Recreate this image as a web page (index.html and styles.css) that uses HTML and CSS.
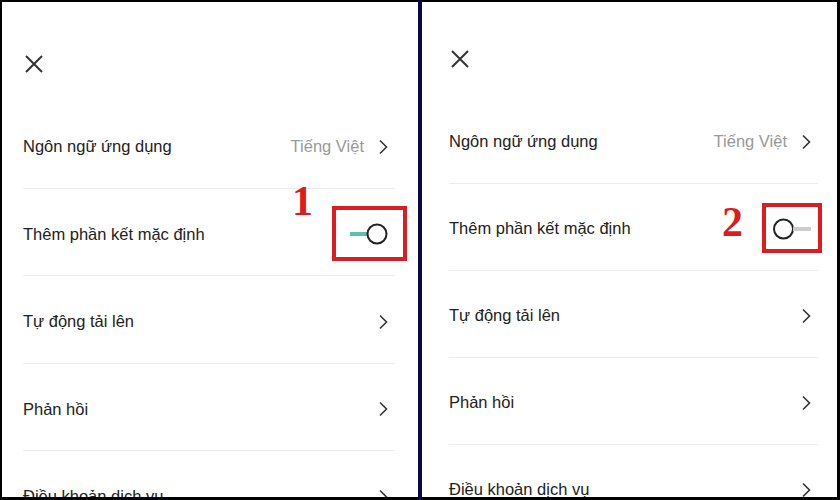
FILE: index.html
```html
<!DOCTYPE html>
<html lang="vi">
<head>
    <meta charset="UTF-8">
    <title>Cài đặt</title>
    <link rel="stylesheet" href="styles.css">
</head>
<body>
    <div class="screen">
        <!-- bước 1: đang bật -->
        <section class="panel panel-left">
            <div class="panel-head">
                <svg class="close-icon" width="22" height="22" viewBox="0 0 22 22"><path d="M3 3L19 19M19 3L3 19" /></svg>
            </div>
            <ul class="menu">
                <li class="menu-row">
                    <span class="label">Ngôn ngữ ứng dụng</span>
                    <span class="row-end">
                        <span class="value">Tiếng Việt</span>
                        <svg class="chevron" width="10" height="16" viewBox="0 0 10 16"><path d="M2 1.5L8.5 8L2 14.5" /></svg>
                    </span>
                </li>
                <li class="menu-row">
                    <span class="label">Thêm phần kết mặc định</span>
                    <svg class="switch" width="38" height="24" viewBox="0 0 38 24"><path class="track-on" d="M0 12H18" /><circle cx="27" cy="12" r="9.5" /></svg>
                    <span class="step-num">1</span>
                    <span class="step-box"></span>
                </li>
                <li class="menu-row">
                    <span class="label">Tự động tải lên</span>
                    <svg class="chevron" width="10" height="16" viewBox="0 0 10 16"><path d="M2 1.5L8.5 8L2 14.5" /></svg>
                </li>
                <li class="menu-row">
                    <span class="label">Phản hồi</span>
                    <svg class="chevron" width="10" height="16" viewBox="0 0 10 16"><path d="M2 1.5L8.5 8L2 14.5" /></svg>
                </li>
                <li class="menu-row">
                    <span class="label">Điều khoản dịch vụ</span>
                    <svg class="chevron" width="10" height="16" viewBox="0 0 10 16"><path d="M2 1.5L8.5 8L2 14.5" /></svg>
                </li>
            </ul>
        </section>

        <div class="split"></div>

        <!-- bước 2: đã tắt -->
        <section class="panel panel-right">
            <div class="panel-head">
                <svg class="close-icon" width="22" height="22" viewBox="0 0 22 22"><path d="M3 3L19 19M19 3L3 19" /></svg>
            </div>
            <ul class="menu">
                <li class="menu-row">
                    <span class="label">Ngôn ngữ ứng dụng</span>
                    <span class="row-end">
                        <span class="value">Tiếng Việt</span>
                        <svg class="chevron" width="10" height="16" viewBox="0 0 10 16"><path d="M2 1.5L8.5 8L2 14.5" /></svg>
                    </span>
                </li>
                <li class="menu-row">
                    <span class="label">Thêm phần kết mặc định</span>
                    <svg class="switch" width="38" height="24" viewBox="0 0 38 24"><circle cx="10.5" cy="12" r="9.5" /><path class="track-off" d="M20 12H38" /></svg>
                    <span class="step-num">2</span>
                    <span class="step-box"></span>
                </li>
                <li class="menu-row">
                    <span class="label">Tự động tải lên</span>
                    <svg class="chevron" width="10" height="16" viewBox="0 0 10 16"><path d="M2 1.5L8.5 8L2 14.5" /></svg>
                </li>
                <li class="menu-row">
                    <span class="label">Phản hồi</span>
                    <svg class="chevron" width="10" height="16" viewBox="0 0 10 16"><path d="M2 1.5L8.5 8L2 14.5" /></svg>
                </li>
                <li class="menu-row">
                    <span class="label">Điều khoản dịch vụ</span>
                    <svg class="chevron" width="10" height="16" viewBox="0 0 10 16"><path d="M2 1.5L8.5 8L2 14.5" /></svg>
                </li>
            </ul>
        </section>
    </div>
</body>
</html>
```

FILE: styles.css
```css
/* chung */
:root {
    --text-color: #222222;
    --muted-color: #999999;
    --line-color: #ececec;
    --mark-color: #dc1c1f;
    --teal: #5dbfae;
}

* {
    margin: 0;
    padding: 0;
    box-sizing: border-box;
}

body {
    font-family: 'Liberation Sans', Arial, sans-serif;
    color: var(--text-color);
    background: #ffffff;
}

.screen {
    width: 840px;
    height: 500px;
    display: flex;
    overflow: hidden;
}

.panel {
    background: #ffffff;
    border-top: 2px solid #000000;
    border-bottom: 3px solid #000000;
    overflow: hidden;
}

.panel-left {
    width: 418px;
    border-left: 2px solid #000000;
    padding: 0 23px 0 21px;
}

.panel-right {
    flex: 1;
    border-right: 3px solid #000000;
    padding: 0 19px 0 27px;
}

/* thanh chia giữa */
.split {
    width: 4px;
    background: #0b0b3b;
}

.panel-head {
    display: flex;
    align-items: flex-start;
}

.panel-left .panel-head {
    height: 99px;
    padding-top: 51px;
}

.panel-right .panel-head {
    height: 95px;
    padding-top: 46px;
}

.close-icon path {
    fill: none;
    stroke: #333333;
    stroke-width: 2;
}

.menu {
    list-style: none;
}

.menu-row {
    position: relative;
    display: flex;
    align-items: center;
    justify-content: space-between;
    border-bottom: 1px solid var(--line-color);
    padding-right: 7px;
    font-size: 16.5px;
}

.panel-left .menu-row {
    height: 87.5px;
    padding-top: 5px;
}

.panel-right .menu-row {
    height: 87px;
    padding-top: 3px;
}

.row-end {
    display: flex;
    align-items: center;
    gap: 14px;
}

.value {
    color: var(--muted-color);
}

.chevron path {
    fill: none;
    stroke: #333333;
    stroke-width: 1.6;
}

.switch circle {
    fill: #ffffff;
    stroke: #222222;
    stroke-width: 2;
}

.track-on {
    stroke: var(--teal);
    stroke-width: 4;
}

.track-off {
    stroke: #cccccc;
    stroke-width: 4;
}

/* khung đánh dấu đỏ */
.step-box {
    position: absolute;
    border: 4px solid var(--mark-color);
}

.step-num {
    position: absolute;
    font-family: 'Liberation Serif', 'Times New Roman', serif;
    font-weight: bold;
    font-size: 42px;
    line-height: 1;
    color: var(--mark-color);
}

.panel-left .step-box {
    right: -12px;
    top: 17px;
    width: 75px;
    height: 55px;
}

.panel-left .step-num {
    right: 82px;
    top: -9px;
}

.panel-right .step-box {
    right: -4px;
    top: 19px;
    width: 60px;
    height: 50px;
}

.panel-right .step-num {
    right: 75px;
    top: 17px;
}
```
